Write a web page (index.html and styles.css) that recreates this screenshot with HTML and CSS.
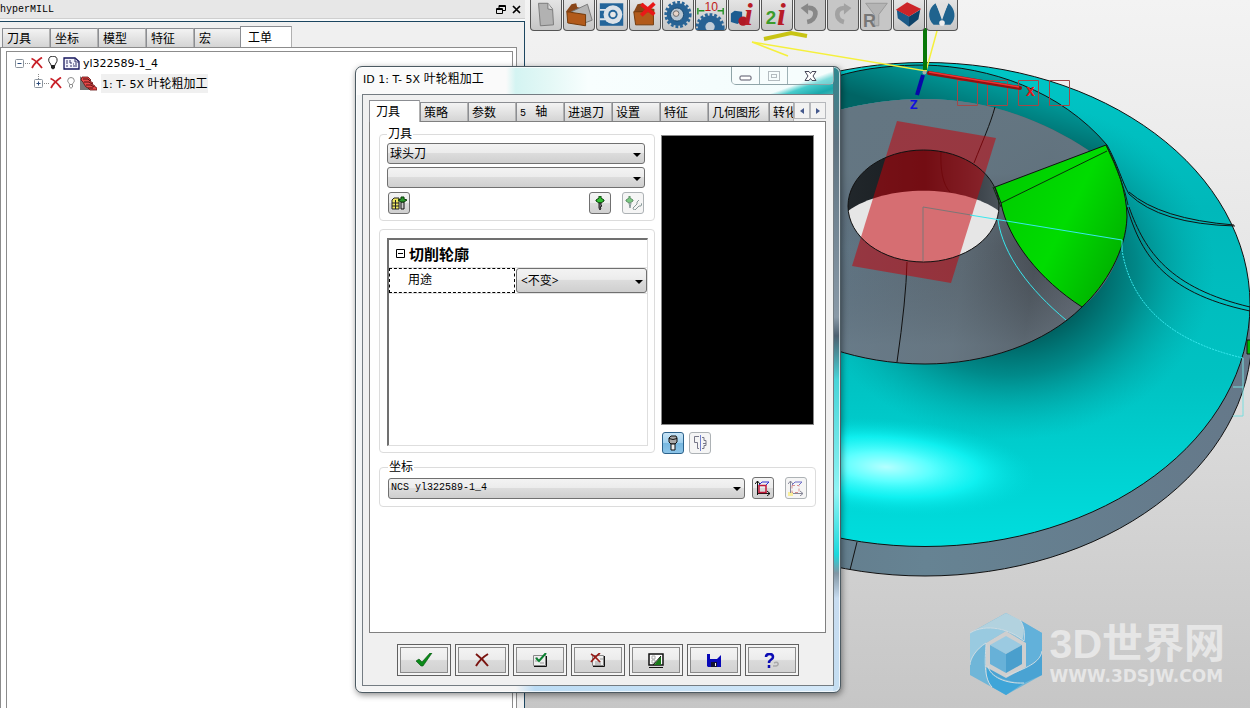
FILE: index.html
```html
<!DOCTYPE html>
<html lang="zh-CN">
<head>
<meta charset="utf-8">
<title>hyperMILL</title>
<link rel="stylesheet" href="styles.css">
</head>
<body>
<div class="workspace">
  <aside class="panel">
    <header class="panel-title">
      <h1 class="panel-name mono">hyperMILL</h1>
      <div class="panel-tools">
        <button class="flat" aria-label="浮动"><svg width="10" height="10" viewBox="0 0 10 10" fill="none" stroke="#000"><path d="M3 3V.5h6.500v5H7M3 1.500h6"/><path d="M.5 3.500h6v5h-6zM.5 4.500h6"/></svg></button>
        <button class="flat" aria-label="关闭面板"><svg width="10" height="10" viewBox="0 0 10 10" stroke="#000" stroke-width="1.700"><path d="M1 1l7 7M8 1L1 8"/></svg></button>
      </div>
    </header>
    <div class="panel-body">
      <div class="tabs" role="tablist">
        <button class="tab" role="tab">刀具</button>
        <button class="tab" role="tab">坐标</button>
        <button class="tab" role="tab">模型</button>
        <button class="tab" role="tab">特征</button>
        <button class="tab" role="tab">宏</button>
        <button class="tab tab-on" role="tab" aria-selected="true">工单</button>
      </div>
      <div class="panel-page">
        <ul class="tree">
          <li class="node">
            <svg class="twig" width="16" height="18" viewBox="0 0 16 18"><rect x=".5" y="5.500" width="8" height="8" rx="1" fill="#fff" stroke="#8a939c"/><path d="M2.500 9.500h4" stroke="#2a4a7a"/><path d="M10 9.500h6" stroke="#888" stroke-dasharray="1 1"/></svg>
            <svg width="12" height="12" viewBox="0 0 12 12" fill="none" stroke="#c82028" stroke-width="1.800"><path d="M.5 1.500C4 3 8 7 11 11M11 .5C7 3 3 7 1 11"/></svg>
            <svg class="bulb" width="10" height="14" viewBox="0 0 10 14"><path d="M3 9.500C3 7.500.7 6.500.7 4.200a4.200 4 0 018.400 0C9.100 6.500 7 7.500 7 9.500z" fill="#fff" stroke="#222"/><path d="M3 9.500h4V12L5 13.500 3 12z" fill="#222"/></svg>
            <svg width="17" height="13" viewBox="0 0 17 13"><path d="M1 1h11l4 3.500V12H1z" fill="#f4f4fc" stroke="#15155c" stroke-width="1.300"/><path d="M12 1v4h4M3 4h2M3 6h2M3 9h2M7 3v3h2M7 9h2M10 7h1M10 9h4M12 7h2" fill="none" stroke="#333368"/></svg>
            <span class="node-name"><span class="latin">yl322589-1_4</span></span>
          </li>
          <li class="node node-child">
            <svg class="twig" width="16" height="18" viewBox="0 0 16 18"><path d="M4.500 0v5M10 9.500h6" stroke="#888" stroke-dasharray="1 1"/><rect x=".5" y="5.500" width="8" height="8" rx="1" fill="#fff" stroke="#8a939c"/><path d="M2.500 9.500h4M4.500 7.500v4" stroke="#2a4a7a"/></svg>
            <svg width="12" height="12" viewBox="0 0 12 12" fill="none" stroke="#c82028" stroke-width="1.800"><path d="M.5 1.500C4 3 8 7 11 11M11 .5C7 3 3 7 1 11"/></svg>
            <svg class="bulb" width="8" height="12" viewBox="0 0 8 12" fill="#fff" stroke="#8c8c8c"><path d="M2.500 7.500C2.500 6 .7 5.500.7 3.700a3.300 3.200 0 016.600 0C7.300 5.500 5.500 6 5.500 7.500zM2.500 8v2L4 11.300 5.500 10V8"/></svg>
            <svg width="17" height="15" viewBox="0 0 17 15"><path d="M0 0v14h11z" fill="#777"/><path d="M2 1h6l3 3-1 1 3 2-1 1 3 2v1l2 1v2h-7l-2-2-2-1-2-3-1-2-2-2z" fill="#e84848" stroke="#601010" stroke-width=".8"/><path d="M3 3h5l2 2M4 6h5l3 2M6 9h5l3 2M8 12h5" fill="none" stroke="#501010"/></svg>
            <span class="node-name node-sel"><span class="latin">1: T- 5X </span>叶轮粗加工</span>
          </li>
        </ul>
      </div>
    </div>
  </aside>

  <main class="viewport">
    <svg class="scene" viewBox="525 0 725 708" preserveAspectRatio="xMinYMin slice" role="img" aria-label="叶轮模型">
      <defs>
        <linearGradient id="bg" x1="0" y1="0" x2="0" y2="1"><stop offset="0" stop-color="#f3f3f3"/><stop offset=".35" stop-color="#e7e7e7"/><stop offset=".8" stop-color="#d0d0d0"/><stop offset="1" stop-color="#c6c6c6"/></linearGradient>
        <linearGradient id="cyan" gradientUnits="userSpaceOnUse" x1="0" y1="62" x2="0" y2="547"><stop offset="0" stop-color="#00c6c6"/><stop offset=".3" stop-color="#00b8ba"/><stop offset=".65" stop-color="#00c2c2"/><stop offset="1" stop-color="#00dede"/></linearGradient>
        <radialGradient id="shade" gradientUnits="userSpaceOnUse" cx="0" cy="0" r="1" gradientTransform="translate(1010 270) scale(205 170)"><stop offset=".4" stop-color="#005a5a" stop-opacity=".95"/><stop offset=".62" stop-color="#006c6c" stop-opacity=".65"/><stop offset="1" stop-color="#00a0a0" stop-opacity="0"/></radialGradient>
        <radialGradient id="shine" gradientUnits="userSpaceOnUse" cx="0" cy="0" r="1" gradientTransform="translate(886 467) rotate(4) scale(150 48)"><stop offset="0" stop-color="#b4ffff"/><stop offset=".3" stop-color="#5cffff"/><stop offset=".62" stop-color="#14fafa" stop-opacity=".75"/><stop offset="1" stop-color="#00dede" stop-opacity="0"/></radialGradient>
        <linearGradient id="rim" gradientUnits="userSpaceOnUse" x1="950" y1="65" x2="935" y2="118"><stop offset="0" stop-color="#00a0a0"/><stop offset="1" stop-color="#006464"/></linearGradient>
        <linearGradient id="hub" gradientUnits="userSpaceOnUse" x1="840" y1="230" x2="1120" y2="270"><stop offset="0" stop-color="#607584"/><stop offset=".45" stop-color="#5c6973"/><stop offset=".7" stop-color="#484e55"/><stop offset="1" stop-color="#696d78"/></linearGradient>
        <linearGradient id="hubtop" gradientUnits="userSpaceOnUse" x1="0" y1="100" x2="0" y2="345"><stop offset="0" stop-color="#647682"/><stop offset=".3" stop-color="#647682" stop-opacity=".9"/><stop offset=".6" stop-color="#5a6670" stop-opacity="0"/><stop offset="1" stop-color="#70828f" stop-opacity=".5"/></linearGradient>
        <linearGradient id="bore" x1="0" y1="0" x2="1" y2="0"><stop offset="0" stop-color="#22282c"/><stop offset=".5" stop-color="#181c20"/><stop offset="1" stop-color="#535c64"/></linearGradient>
        <linearGradient id="leaf" x1="0" y1="0" x2="1" y2=".6"><stop offset="0" stop-color="#00c800"/><stop offset=".6" stop-color="#00dc00"/><stop offset="1" stop-color="#00b400"/></linearGradient>
        <linearGradient id="base" x1="0" y1="0" x2="1" y2="0"><stop offset="0" stop-color="#5e7382"/><stop offset=".5" stop-color="#668393"/><stop offset="1" stop-color="#657889"/></linearGradient>
        <clipPath id="hole"><ellipse cx="923.500" cy="206" rx="75.500" ry="56"/></clipPath>
      </defs>
      <rect x="525" width="725" height="708" fill="url(#bg)"/>
      <ellipse cx="925" cy="334" rx="327" ry="242" fill="url(#base)" stroke="#111"/>
      <path d="M1247 340h4v14h-4z" fill="#00b400" stroke="#111"/>
      <ellipse cx="925" cy="304.500" rx="325" ry="242" fill="url(#cyan)"/>
      <ellipse cx="925" cy="304.500" rx="325" ry="242" fill="url(#shade)"/>
      <ellipse cx="925" cy="304.500" rx="325" ry="242" fill="url(#shine)" stroke="#111"/>
      <path d="M835 77C865 67 900 65 925 65C990 67 1060 90 1107 145L1127 213L1088 160C1040 118 985 99 923 99C895 99 865 103 835 111z" fill="url(#rim)"/>
      <path d="M835 111C865 103 895 99 923 99C985 99 1040 118 1088 150L1127 213C1125 250 1110 285 1082 307C1045 344 985 364 925 364C890 364 860 358 835 350z" fill="url(#hub)"/>
      <path d="M835 111C865 103 895 99 923 99C985 99 1040 118 1088 150L1127 213C1125 250 1110 285 1082 307C1045 344 985 364 925 364C890 364 860 358 835 350z" fill="url(#hubtop)"/>
      <g fill="none" stroke="#111">
        <path d="M835 77C865 67 900 65 925 65C990 67 1060 90 1107 145M1082 307C1045 344 985 364 925 364C890 364 860 358 835 350"/>
        <path d="M995 107C990 125 983 140 974 163M907 262Q906 300 897 362M857 542l-7 28"/>
        <path d="M1107 145C1118 165 1122 182 1129 194Q1160 224 1235 226M1129 192Q1160 219 1234 225M1127 207C1140 250 1160 292 1250 311M1129 207C1145 252 1170 288 1250 307"/>
      </g>
      <g clip-path="url(#hole)">
        <path d="M840 140h170v130H840z" fill="url(#bore)"/>
        <path d="M848 211C885 184 962 184 999 211v60H848z" fill="#e6e6e6"/>
        <path d="M941 150C940 170 943 185 950 192" fill="none" stroke="#111"/>
      </g>
      <path d="M897 121L996 138L951 283L852 266z" fill="#c80008" fill-opacity=".52"/>
      <ellipse cx="923.500" cy="206" rx="75.500" ry="56" fill="none" stroke="#111"/>
      <path d="M995 187L1106 145C1117 165 1127 193 1127 217C1126 250 1106 285 1082 307C1040 280 1008 240 1001 203z" fill="url(#leaf)" stroke="#111"/>
      <path d="M1001 203L1107 151M993 187l8 20M1106 145q18 38 22 60" fill="none" stroke="#0a300a"/>
      <path d="M923 261V207l48 8" fill="none" stroke="#7c7676"/>
      <g fill="none" stroke="#38e8ee"><path d="M970 215L1122 240v10M998 220C1003 255 1030 290 1066 320"/><path d="M1122 250C1130 300 1165 340 1243 358" stroke-dasharray="2 1"/><path d="M1243 358v58h-10M1233 387h10" stroke="#79dede"/></g>
      <g fill="none" stroke="#a04848"><path d="M957.500 80.500h20v25h-20zM987.500 80.500h20v25h-20zM1018.500 80.500h20v25h-20zM1049.500 80.500h20v25h-20z"/></g>
      <path d="M937 31L926 71L752 42L788 56" fill="none" stroke="#f5f03c" stroke-width="1.500"/>
      <path d="M764 39L791 33L807 36" fill="none" stroke="#c8c414" stroke-width="4"/>
      <path d="M925 28V70" stroke="#087808" stroke-width="4"/>
      <path d="M923 75L917 95" stroke="#0808a8" stroke-width="4"/>
      <path d="M929 73L1020 88" stroke="#961010" stroke-width="4" stroke-linecap="round"/>
      <path d="M929 72L1019 87" stroke="#ee3434" stroke-width="1.500"/>
      <circle cx="924.500" cy="72.500" r="2" fill="#aaa"/>
      <text class="axis" x="910" y="109" fill="#1010e0">Z</text>
      <text class="axis" x="1026" y="96" fill="#e01818">X</text>
    </svg>

    <nav class="toolbar" aria-label="工具栏">
      <button class="tool" aria-label="新建"><svg viewBox="0 0 32 31"><path d="M8 3l10 0 5 6 1 17-14 1z" fill="#b2b2b2" stroke="#777"/><path d="M18 3v6l5 1" fill="#ddd" stroke="#777"/></svg></button>
      <button class="tool" aria-label="打开"><svg viewBox="0 0 32 31"><path d="M2 12L8 4l5-1 1 4 10 3v4" fill="#8a4618"/><path d="M8 12l17-8 5 17-8 3z" fill="#b5b5b5" stroke="#777"/><path d="M3 12l20 3v12L4 24z" fill="#b25a1b" stroke="#703608"/></svg></button>
      <button class="tool" aria-label="刀具库"><svg viewBox="0 0 32 31"><path d="M3 3h25v24H3z" fill="#24659a"/><circle cx="17" cy="15" r="10" fill="#dce2e8"/><circle cx="17" cy="15" r="5" fill="#24659a"/><circle cx="17" cy="15" r="3" fill="#e8e8e8"/><path d="M3 9h10v2H3zM3 19h10v2H3z" fill="#dce2e8"/></svg></button>
      <button class="tool" aria-label="删除"><svg viewBox="0 0 32 31"><path d="M4 12l4-8 6-1 2 4 10 2v4" fill="#8a4618"/><path d="M4 12h21v14H6z" fill="#b25a1b" stroke="#703608"/><path d="M12 4l14 11M26 3L12 16" stroke="#e81818" stroke-width="4"/></svg></button>
      <button class="tool" aria-label="齿轮"><svg viewBox="0 0 32 31"><circle cx="16" cy="15" r="13" fill="none" stroke="#2a6698" stroke-width="3" stroke-dasharray="3 2"/><circle cx="16" cy="15" r="12" fill="#276294"/><circle cx="15" cy="15" r="7" fill="#b8c6d2" stroke="#17486f"/><circle cx="14" cy="14" r="3" fill="#e8d4c8" stroke="#666"/></svg></button>
      <button class="tool" aria-label="齿轮参数"><svg viewBox="0 0 32 31"><circle cx="15" cy="29" r="14" fill="none" stroke="#2a6698" stroke-width="3" stroke-dasharray="3 2"/><circle cx="15" cy="29" r="13" fill="#276294"/><circle cx="15" cy="28" r="5" fill="#c3ced8"/><path d="M2 8v7M29 8v7M3 11h6M23 11h6" stroke="#229022" stroke-width="1.500"/><text class="num" x="9" y="11" fill="#c01c1c">10</text></svg></button>
      <button class="tool" aria-label="信息"><svg viewBox="0 0 32 31"><path d="M2 14l4-3 8 1v10l-5 3-7-2z" fill="#1c5c90"/><circle cx="15" cy="22" r="5" fill="#b01824"/><text class="info" x="16" y="26" fill="#b81c28">i</text></svg></button>
      <button class="tool" aria-label="两点信息"><svg viewBox="0 0 32 31"><text class="two" x="4" y="25" fill="#3c9c2c">2</text><text class="info" x="16" y="26" fill="#b81c28">i</text></svg></button>
      <button class="tool tool-off" aria-label="撤销"><svg viewBox="0 0 32 31"><path d="M14 8C25 7 24 21 13 23" fill="none" stroke="#888" stroke-width="5"/><path d="M14 3v12L6 8z" fill="#888"/></svg></button>
      <button class="tool tool-off" aria-label="重做"><svg viewBox="0 0 32 31"><path d="M17 8C7 8 8 21 17 23" fill="none" stroke="#a2a2a2" stroke-width="5"/><path d="M17 3v12l8-7z" fill="#a2a2a2"/></svg></button>
      <button class="tool tool-off" aria-label="过滤"><svg viewBox="0 0 32 31"><path d="M5 3h23L19 15v12h-5V15z" fill="#b4b4b4" stroke="#999"/><text class="filter" x="2" y="28" fill="#777">R</text></svg></button>
      <button class="tool" aria-label="毛坯"><svg viewBox="0 0 32 31"><path d="M3 10l13 7v11L4 19z" fill="#1b5a87"/><path d="M16 17l12-7-2 10-10 8z" fill="#0d4268"/><path d="M2 10L14 2l15 7-13 8z" fill="#cc2428"/></svg></button>
      <button class="tool" aria-label="视图"><svg viewBox="0 0 32 31"><path d="M9 3C1 9 0 19 7 26h18c7-7 5-17-2-23l-7 15z" fill="#1f638e"/><path d="M10 4l6 17 6-17z" fill="#e0e0e0"/><circle cx="16" cy="24" r="3" fill="#eee"/></svg></button>
    </nav>

    <div class="brand">
      <svg class="brand-mark" width="72" height="82" viewBox="0 0 72 82"><path d="M0 20L36 0l36 20v42L36 82 0 62z" fill="#6fb6d8"/><path d="M0 20L36 0l14 7c6 9 6 14 4 21C40 16 16 10 0 20z" fill="#b2d2df"/><path d="M50 7l22 13v18C68 52 52 56 52 56V28C55 20 54 12 50 7z" fill="#62b1da"/><path d="M72 38v24L54 70C40 69 20 64 18 53l18 10C56 57 70 48 72 38z" fill="#4aa3d3"/><path d="M18 53c2 11 18 18 36 17L36 82 22 74C16 66 16 60 18 53z" fill="#3fa5d8"/><path d="M0 20C16 10 38 16 54 28L36 18 16 30C6 36 0 46 0 52z" fill="#99cae0"/><path d="M16 30L36 18l20 12v24L36 65 16 54z" fill="#cfcfcf"/><path d="M20 32l16-9 16 9-16 9z" fill="#9bcae1"/><path d="M20 32l16 9v19l-16-9z" fill="#67b1d8"/><path d="M52 32l-16 9v19l16-9z" fill="#4a9fcd"/><path d="M0 20C16 10 40 16 54 28C55 20 54 12 50 7M72 38C70 50 56 55 36 63M18 53c2 11 18 18 36 17M22 74C12 64 16 38 16 30C6 36 0 46 0 52" fill="none" stroke="#cfdce2"/></svg>
      <div class="brand-text"><span class="brand-name">3D世界网</span><span class="brand-url">WWW.3DSJW.COM</span></div>
    </div>
  </main>
</div>

<section class="dialog" role="dialog" aria-labelledby="dlg-title">
  <header class="dialog-title">
    <h2 class="dialog-name" id="dlg-title"><span class="latin">ID 1: T- 5X </span>叶轮粗加工</h2>
    <div class="win-buttons">
      <button class="win" aria-label="最小化"><svg width="13" height="12" viewBox="0 0 13 12"><rect x="1" y="6" width="11" height="4" rx="1" fill="#fff" stroke="#556"/></svg></button>
      <button class="win" aria-label="最大化" disabled><svg width="12" height="12" viewBox="0 0 12 12" fill="none" stroke="#b4bcc0"><rect x=".5" y="1.500" width="11" height="9"/><rect x="3.500" y="4.500" width="5" height="3"/></svg></button>
      <button class="win win-close" aria-label="关闭"><svg width="13" height="12" viewBox="0 0 13 12"><path d="M1 1.500h4L6.500 3.500 8 1.500h4L9 6l3 4.500H8L6.500 8.500 5 10.500H1L4 6z" fill="#fff" stroke="#445"/></svg></button>
    </div>
  </header>
  <div class="dialog-body">
    <div class="tabs dialog-tabs" role="tablist">
      <button class="tab tab-on" role="tab" aria-selected="true">刀具</button>
      <button class="tab" role="tab">策略</button>
      <button class="tab" role="tab">参数</button>
      <button class="tab" role="tab"><span class="mono">5&nbsp;</span> 轴</button>
      <button class="tab" role="tab">进退刀</button>
      <button class="tab" role="tab">设置</button>
      <button class="tab" role="tab">特征</button>
      <button class="tab tab-wide" role="tab">几何图形</button>
      <button class="tab tab-cut" role="tab">转化</button>
      <button class="scroller" aria-label="向左"><svg width="4" height="6" viewBox="0 0 4 6"><path d="M4 0v6L0 3z" fill="#44588c"/></svg></button>
      <button class="scroller" aria-label="向右"><svg width="4" height="6" viewBox="0 0 4 6"><path d="M0 0v6l4-3z" fill="#44588c"/></svg></button>
    </div>
    <div class="page">
      <div class="left-col">
        <fieldset class="group group-tool">
          <legend>刀具</legend>
          <span class="combo"><select aria-label="刀具类型"><option>球头刀</option></select></span>
          <span class="combo"><select aria-label="刀具名称"><option></option></select></span>
          <div class="row">
            <button class="mini" aria-label="刀具数据库"><svg width="16" height="14" viewBox="0 0 16 14"><path d="M1 4l2-2h5v11H1z" fill="#f0e860" stroke="#222"/><path d="M1 7h7M1 10h7M4.500 4v9" stroke="#222"/><path d="M10 6h3v7h-3z" fill="#ccc" stroke="#111"/><path d="M7 4l3-1V1h3v2l3 1-3 2h-3z" fill="#289828" stroke="#083808"/></svg></button>
            <span class="grow"></span>
            <button class="mini" aria-label="新建刀具"><svg width="12" height="14" viewBox="0 0 12 14"><path d="M5 0h2v2l3 2v1L7 7H5L2 5V4l3-2z" fill="#32c032" stroke="#084008"/><path d="M5 7h2v2l1 1-2 1 1 1-1 2-1-2z" fill="#777" stroke="#222"/></svg></button>
            <button class="mini mini-off" aria-label="编辑刀具" disabled><svg width="17" height="14" viewBox="0 0 17 14"><path d="M4 0h1v2l3 2v1L5 7H4L1 5V4l3-2z" fill="#78c880" stroke="#609068"/><path d="M4 7h2l-1 5zM8 12l4-4V6l2-2M10 14l4-4h2l1-3M8 12q0 2 2 2" fill="none" stroke="#899"/></svg></button>
          </div>
        </fieldset>
        <div class="group group-props">
          <div class="props">
            <div class="prop-head"><button class="flat" aria-label="折叠"><svg width="9" height="9" viewBox="0 0 9 9" fill="none" stroke="#000"><path d="M.5.500h8v8h-8zM2 4.500h5"/></svg></button>切削轮廓</div>
            <div class="prop-row">
              <label class="prop-name" for="usage">用途</label>
              <span class="combo"><select id="usage"><option>&lt;不变&gt;</option></select></span>
            </div>
          </div>
        </div>
      </div>
      <div class="right-col">
        <div class="preview"></div>
        <div class="row view-row">
          <button class="mini mini-on" aria-label="刀具视图" aria-pressed="true"><svg width="12" height="16" viewBox="0 0 12 16"><path d="M2 3l2-2h5l1 2v4L8 9H4L2 7z" fill="#aaa" stroke="#111"/><path d="M4 9h4v6H4z" fill="#eee" stroke="#111"/><path d="M2 3.500l4 1 4-1" fill="none" stroke="#111"/></svg></button>
          <button class="mini mini-off" aria-label="刀柄剖面" disabled><svg width="14" height="16" viewBox="0 0 14 16" fill="none" stroke="#778"><path d="M6 1.500H1.500v6h3v6H6M9 2.500h2v3h2v5h-2v3H9M10 8.500h3"/><path d="M7.500 0v16" stroke="#7080d0"/></svg></button>
        </div>
      </div>
      <fieldset class="group group-frame">
        <legend>坐标</legend>
        <div class="row frame-row">
          <span class="combo grow mono"><select aria-label="坐标"><option>NCS yl322589-1_4</option></select></span>
          <button class="mini" aria-label="选择坐标"><svg width="16" height="16" viewBox="0 0 16 16" fill="none"><path d="M2.500 15V1M0 4l2.500-3L5 4M2 13.500h13M12 11l3 2.500-3 2.500" stroke="#111"/><path d="M4 5.500h7v7H4z" stroke="#c01838" stroke-width="1.500"/><path d="M4 5l3-3h7l-3 3" stroke="#3030d0"/></svg></button>
          <button class="mini mini-off" aria-label="新建坐标" disabled><svg width="16" height="16" viewBox="0 0 16 16" fill="none"><path d="M0 12h5v4H0z" fill="#f8ee9c"/><path d="M2.500 13V1M0 4l2.500-3L5 4M5 13.500h10M12 11l3 2.500-3 2.500" stroke="#889"/><path d="M4 5.500h7v7H4z" stroke="#d89090" stroke-dasharray="3 2"/><path d="M4 5l3-3h7l-3 3" stroke="#7070c8"/></svg></button>
        </div>
      </fieldset>
    </div>
    <footer class="actions">
      <button class="action" aria-label="确定"><svg width="18" height="14" viewBox="0 0 18 14"><path d="M1 8l3-2 3 3L15 0h2L8 13H6z" fill="#0a8a18" stroke="#075010" stroke-width=".6"/></svg></button>
      <button class="action" aria-label="取消"><svg width="16" height="14" viewBox="0 0 16 14" fill="none" stroke="#7a1410" stroke-width="2"><path d="M2 1c4 3 8 7 12 12M14 1C9 4 5 8 2 13"/></svg></button>
      <button class="action" aria-label="应用"><svg width="16" height="14" viewBox="0 0 16 14" fill="none"><path d="M1.500 2.500h12v10h-12z" fill="#eee" stroke="#888"/><path d="M14.500 3v10.500H2" stroke="#111"/><path d="M3 5h3M3 8h3M8 10h4" stroke="#999"/><path d="M4 5l3 3 7-8" stroke="#0a8030" stroke-width="2"/></svg></button>
      <button class="action" aria-label="清除"><svg width="16" height="14" viewBox="0 0 16 14" fill="none"><path d="M2.500 2.500h11v10h-11z" fill="#eee" stroke="#888"/><path d="M14.500 3v10.500H3" stroke="#111"/><path d="M5 9h6M5 11h6M10 6h3" stroke="#999"/><path d="M1 1c4 2 6 5 9 8M10 0C6 3 4 5 1 9" stroke="#981c18" stroke-width="1.700"/></svg></button>
      <button class="action" aria-label="预览"><svg width="16" height="15" viewBox="0 0 16 15" fill="none"><path d="M1 1h14v11H1z" fill="#fff" stroke="#111" stroke-width="1.500"/><path d="M4 3h3v3H4zM4 7h3v3H4z" stroke="#aaa"/><path d="M6 12L13 3v9z" fill="#187818"/><path d="M5 12l8-9M1 14.500h14" stroke="#111"/></svg></button>
      <button class="action" aria-label="保存"><svg width="14" height="13" viewBox="0 0 14 13"><path d="M0 0h3v5h7l4-4v12H1L0 12z" fill="#0808b8"/><path d="M4 8h6v5H4z" fill="#101030"/><path d="M8 9h1v3H8z" fill="#eee"/></svg></button>
      <button class="action" aria-label="帮助"><svg width="16" height="15" viewBox="0 0 16 15" fill="none"><path d="M2 4c0-4 7-4 7 0 0 3-4 2-4 6M5 12v3" stroke="#0c0cb4" stroke-width="2.500"/><path d="M10 10c4-2 6 2 2 3h-3" stroke="#aaa" stroke-width="1.500"/></svg></button>
    </footer>
  </div>
</section>
</body>
</html>
```
FILE: styles.css
```css
* { box-sizing: border-box; }

body {
  margin: 0;
  font: 12px/16px "Noto Sans", "Noto Sans CJK SC", sans-serif;
  color: #000;
  overflow: hidden;
}

button, select {
  font: inherit;
  color: inherit;
  margin: 0;
  padding: 0;
}

svg { display: block; flex: none; }

h1, h2 { margin: 0; font-size: 12px; font-weight: 400; }

.mono { font-family: "Liberation Mono", "Noto Sans CJK SC", monospace; }
h1.mono, span.mono { font-size: 10px; }
.latin { font: 11px/16px "DejaVu Sans", sans-serif; white-space: pre; }

.flat { border: 0; background: none; }
.row { display: flex; align-items: center; }
.grow { flex: 1; }

/* workspace */
.workspace { display: flex; height: 100vh; }

.panel {
  display: flex;
  flex-direction: column;
  flex: 0 0 42%;
  background: #f8fafb;
}

.panel-title {
  display: flex;
  align-items: center;
  justify-content: space-between;
  height: 19px;
  padding: 1px 3px 0 0;
  background: #e7e7e7;
  border-bottom: 1px solid #cfcfcf;
}

.panel-tools { display: flex; gap: 6px; }

.panel-body {
  flex: 1;
  display: flex;
  flex-direction: column;
  margin-top: 2px;
  padding: 4px 7px 0 0;
  border-top: 1px solid #1c4660;
  border-right: 1px solid #1c4660;
  background: #f0f0f0;
}

.panel-page {
  flex: 1;
  padding: 3px 3px 0 5px;
  border: 1px solid #8c8c8c;
  border-bottom: 0;
  background: #fff;
}

/* tabs */
.tabs { display: flex; align-items: flex-end; padding-left: 2px; }

.tab {
  width: 48px;
  height: 19px;
  padding-left: 4px;
  border: 1px solid #8b8d92;
  border-bottom: 0;
  border-right-color: #b0b0b0;
  background: linear-gradient(#f3f3f3, #d4d4d4);
  line-height: 17px;
  text-align: left;
  white-space: nowrap;
  overflow: hidden;
}

.tab-on {
  width: 52px;
  height: 22px;
  margin: 0 0 -1px -2px;
  padding-left: 7px;
  background: #fff;
  line-height: 18px;
}

.dialog-tabs { padding-left: 0; }
.dialog-tabs .tab { padding-left: 3px; }
.dialog-tabs .tab-on { margin-left: 0; padding-left: 6px; width: 51px; }
.dialog-tabs .tab-wide { width: 61px; }
.dialog-tabs .tab-cut { flex: 1; min-width: 0; }

.scroller {
  display: grid;
  place-items: center;
  width: 16px;
  height: 17px;
  margin-bottom: 2px;
  border: 1px solid #b6b8bc;
  background: #f2f2f2;
}

/* job tree */
.tree {
  height: 100%;
  margin: 0;
  padding: 1px 0 0 8px;
  list-style: none;
  border: 1px solid #8c8c8c;
  border-bottom: 0;
}

.node { display: flex; align-items: center; gap: 4px; height: 20px; }
.node-child { padding-left: 19px; }
.twig { margin-right: -4px; }
.bulb { margin: 0 1px; }
.node .bulb + svg { margin-right: -2px; }
.node-name { padding: 0 1px; }
.node-sel { margin-left: 2px; background: #f0f0f0; line-height: 19px; }

/* model view */
.viewport { position: relative; flex: 1; min-width: 0; }
.scene { position: absolute; inset: 0; width: 100%; height: 100%; }
.axis { font: bold 13px "Noto Sans", sans-serif; }

.toolbar { position: relative; display: flex; gap: 1px; padding-left: 5px; }

.tool {
  width: 32px;
  height: 31px;
  border: 1px solid #555;
  border-top: 0;
  border-radius: 0 0 4px 4px;
  background: linear-gradient(#e4e4e4, #c6c6c6);
}

.tool svg { width: 100%; height: 100%; }
.tool-off { background: #c6c6c6; }
.num { font: 13px "Liberation Sans", sans-serif; }
.info { font: italic bold 34px "Liberation Serif", serif; }
.two { font: bold 20px "Liberation Sans", sans-serif; }
.filter { font: bold 19px "Liberation Sans", sans-serif; }

.brand {
  position: absolute;
  right: 25px;
  bottom: 13px;
  display: flex;
  align-items: center;
  gap: 8px;
  color: #e6e6e6;
}

.brand-text { display: flex; flex-direction: column; }
.brand-name { font: bold 41px/44px "Liberation Sans", "Noto Sans CJK SC", sans-serif; white-space: nowrap; }
.brand-url { font: bold 17px/20px "DejaVu Sans", sans-serif; white-space: nowrap; }

/* dialog window */
.dialog {
  position: absolute;
  left: 355px;
  top: 66px;
  width: 486px;
  padding: 0 6px 6px;
  border: 1px solid #4c5a62;
  border-radius: 7px;
  background:
    linear-gradient(#2f8890, #5f7482 12%, #8a9aa8 40%, #4d6070 43%, #48d4d8 50%, #8ff4f4 68%, #1cd8dc 78%, #8296a4 81%, #c8dcf0 85%, #c4def2) right / 7px 100% no-repeat,
    linear-gradient(90deg, #f4f4f4, #f4f4f4 33%, #bcdcf4 37%, #d4e8f8) bottom / 100% 7px no-repeat,
    linear-gradient(160deg, transparent 66%, #48cccc 74%, #1aa8ac 88%, #58b8b8) top right / 140px 28px no-repeat,
    linear-gradient(90deg, #fafafa 31%, #d4f4f2 33%, #e4f8f6 40%, #f8fefe 48%, #f2fcfc) top / 100% 28px no-repeat,
    #f2f4f5;
  box-shadow: inset 0 0 0 1px rgba(255, 255, 255, .7), 1px 2px 6px rgba(0, 0, 0, .45);
}

.dialog-title { display: flex; justify-content: space-between; height: 27px; }
.dialog-name { padding: 4px 0 0 1px; }

.win-buttons {
  display: flex;
  height: 18px;
  border: 1px solid #8fa4a8;
  border-top: 0;
  border-radius: 0 0 5px 5px;
}

.win {
  display: grid;
  place-items: center;
  width: 28px;
  border: 0;
  border-right: 1px solid #9fb2b6;
  background: rgba(255, 255, 255, .3);
}

.win-close { width: 45px; border-right: 0; }

.dialog-body {
  padding: 5px 7px 9px 6px;
  border: 1px solid #747c82;
  background: #f0f0f0;
}

.page {
  display: grid;
  grid-template-columns: 276px 1fr;
  gap: 5px 6px;
  align-content: start;
  min-height: 512px;
  padding: 4px 9px 0;
  border: 1px solid #808080;
  background: #fff;
}

.left-col { display: flex; flex-direction: column; gap: 8px; }
.right-col { padding: 9px 2px 0 0; }

.group {
  min-width: 0;
  margin: 0;
  border: 1px solid #dcdcdc;
  border-radius: 4px;
}

.group legend { padding: 0 1px; line-height: 16px; }
.group-tool { padding: 1px 9px 6px 7px; }
.group-tool .combo + .combo { margin-top: 3px; }
.group-tool .row { gap: 11px; margin-top: 4px; padding: 0 1px; }
.group-props { padding: 8px 6px 6px 7px; }
.group-frame { grid-column: 1 / -1; padding: 2px 8px 7px; }
.frame-row { gap: 11px; }
.frame-row .combo { margin-right: -4px; }

.combo { position: relative; display: block; }

.combo select {
  display: block;
  width: 100%;
  height: 21px;
  padding: 0 20px 0 2px;
  appearance: none;
  border: 1px solid #707070;
  border-radius: 3px;
  background: linear-gradient(#f3f3f3, #ececec 45%, #dcdcdc 50%, #cfcfcf);
}

.combo::after {
  content: "";
  position: absolute;
  right: 4px;
  top: 50%;
  margin-top: -1px;
  border: 4px solid transparent;
  border-top-color: #000;
  border-bottom: 0;
  pointer-events: none;
}

.mini {
  display: grid;
  place-items: center;
  width: 22px;
  height: 22px;
  border: 1px solid #707070;
  border-radius: 3px;
  background: linear-gradient(#f4f4f4, #ececec 48%, #dadada 52%, #d0d0d0);
}

.mini-off { border-color: #adb2b5; background: #f5f5f5; }
.mini-on { border-color: #2c628b; background: linear-gradient(#c8e4f6, #9fd0ee 48%, #78b8e0 52%, #8cc4e8); }

.props {
  height: 208px;
  border: 1px solid #dedede;
  border-top: 2px solid #707070;
  border-left: 2px solid #707070;
}

.prop-head {
  display: flex;
  align-items: center;
  gap: 4px;
  height: 28px;
  padding-left: 7px;
  border-bottom: 1px solid #e4e4e4;
  font-size: 15px;
  font-weight: 700;
}

.prop-row {
  display: grid;
  grid-template-columns: 126px 1fr;
  gap: 1px;
  height: 26px;
  border-bottom: 1px solid #e4e4e4;
}

.prop-name { padding: 3px 18px; border: 1px dashed #000; }
.prop-row .combo select { height: 25px; padding-left: 4px; }

.preview {
  height: 290px;
  border: 1px solid #888;
  background: #000;
}

.view-row { gap: 5px; margin-top: 7px; padding-left: 1px; }

.actions { display: flex; justify-content: center; gap: 4px; padding-top: 11px; }

.action {
  display: grid;
  place-items: center;
  width: 54px;
  height: 32px;
  border: 1px solid #606060;
  outline: 1px solid #8a8a8a;
  outline-offset: -4px;
  background: linear-gradient(#f5f5f5, #ececec 48%, #dadada 52%, #d0d0d0);
  box-shadow: inset 0 0 0 2px #f4f4f4;
}
```
